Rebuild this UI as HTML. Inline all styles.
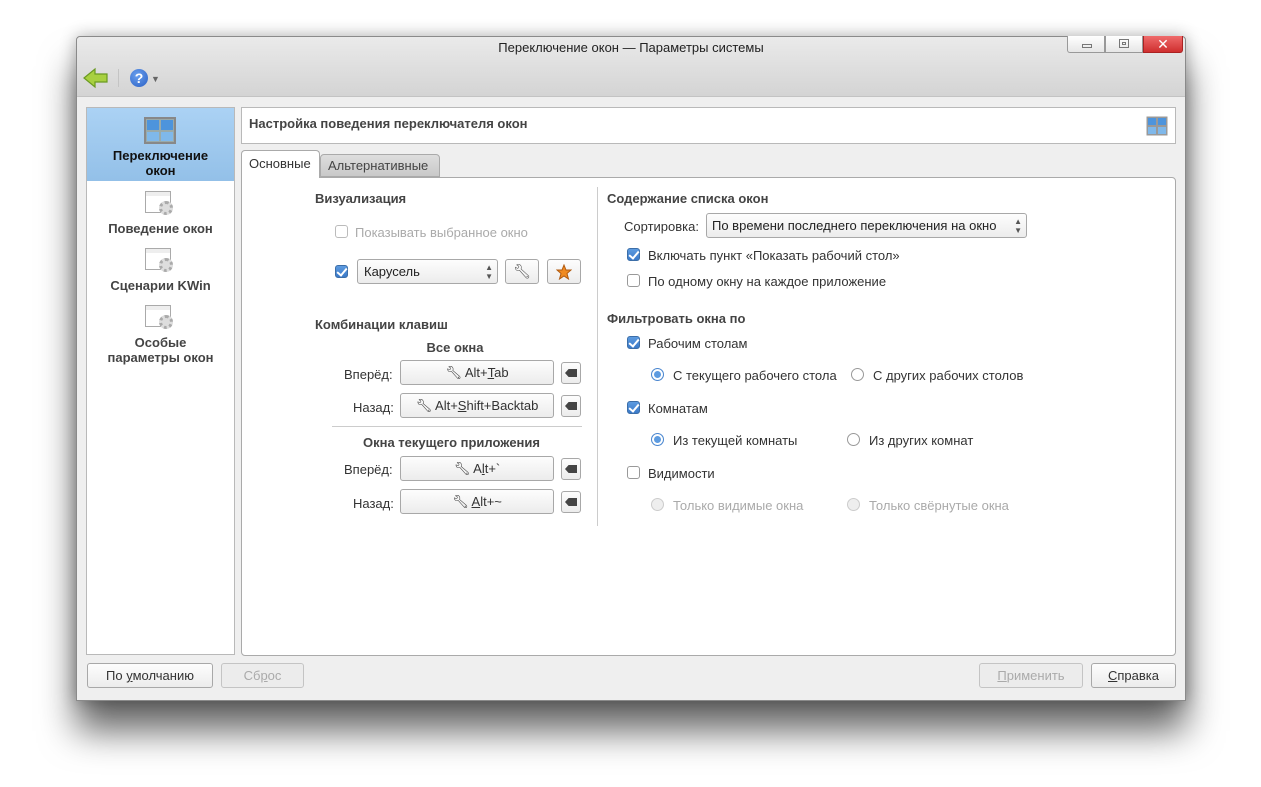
<!DOCTYPE html>
<html><head><meta charset="utf-8"><style>
*{box-sizing:border-box;margin:0;padding:0}
body{width:1261px;height:787px;background:#fff;position:relative;overflow:hidden;font-family:"Liberation Sans","DejaVu Sans",sans-serif;font-size:13px;color:#333}
.a{position:absolute}
#win{left:76px;top:36px;width:1110px;height:665px;background:#efefef;border:1px solid #8a8a8a;border-radius:4px 4px 0 0;box-shadow:0 30px 36px rgba(0,0,0,.6),0 0 16px rgba(0,0,0,.3)}
.top{left:0;top:0;width:1108px;height:60px;background:linear-gradient(#eaeaea,#d4d4d4);border-bottom:1px solid #c3c3c3;border-radius:4px 4px 0 0}
.t{white-space:nowrap}
.b{font-weight:bold}
.box{background:#fff;border:1px solid #b9b9b9}
.btn{background:linear-gradient(#fdfdfd,#ececec);border:1px solid #a8a8a8;border-radius:3px;text-align:center;line-height:23px}
.dis{color:#aaa;border-color:#c4c4c4}
.cb{width:13px;height:13px;border:1px solid #999;border-radius:3px;background:#fff}
.cb.on{background:linear-gradient(#5d9be0,#3a79c8);border-color:#3c6ea8}
.cb.on::after{content:"";position:absolute;left:3px;top:0px;width:4px;height:8px;border:solid #fff;border-width:0 2px 2px 0;transform:rotate(40deg)}
.rb{width:13px;height:13px;border:1px solid #999;border-radius:50%;background:#fff}
.rb.on{border-color:#4a86cf;box-shadow:inset 0 0 0 2px #fff,inset 0 0 0 6px #5d9be0}
.dim{color:#aaa}
.x{width:20px;height:22px;background:linear-gradient(#fdfdfd,#ececec);border:1px solid #a8a8a8;border-radius:3px}
.x::after{content:"";position:absolute;left:3px;top:6px;width:12px;height:8px;background:#444;clip-path:polygon(30% 0,100% 0,100% 100%,30% 100%,0 50%)}
</style></head><body>
<div id="win" class="a">
 <div class="a top"></div>
 <div class="a t" style="left:0;width:1108px;top:3px;text-align:center;font-size:13px;color:#222">Переключение окон — Параметры системы</div>
 <div class="a" style="left:990px;top:-1px;width:38px;height:17px;background:linear-gradient(#fff,#e6e6e6);border:1px solid #999;border-top:none;border-radius:0 0 0 3px"><div class="a" style="left:14px;top:8px;width:10px;height:4px;border:1px solid #777"></div></div>
 <div class="a" style="left:1028px;top:-1px;width:38px;height:17px;background:linear-gradient(#fff,#e6e6e6);border:1px solid #999;border-top:none"><div class="a" style="left:13px;top:3px;width:10px;height:9px;border:1px solid #777"></div><div class="a" style="left:16px;top:6px;width:4px;height:3px;border:1px solid #777"></div></div>
 <div class="a" style="left:1066px;top:-1px;width:40px;height:17px;background:linear-gradient(#ef6b6b,#cf2f2f);border:1px solid #a22;border-top:none;border-radius:0 0 3px 0;color:#fff;font-weight:bold;text-align:center;line-height:16px;font-size:14px">✕</div>
 <svg class="a" style="left:6px;top:30px" width="26" height="22"><path d="M1 11 L12 2 L12 7 L24 7 L24 15 L12 15 L12 20 Z" fill="#a8d040" stroke="#6a9a20" stroke-width="1.2"/></svg>
 <div class="a" style="left:41px;top:32px;width:1px;height:18px;background:#c4c4c4"></div>
 <div class="a" style="left:53px;top:32px;width:18px;height:18px;border-radius:50%;background:radial-gradient(circle at 40% 35%,#6aa0ee,#2a5fc4);color:#fff;font-weight:bold;text-align:center;line-height:18px;font-size:14px">?</div>
 <div class="a" style="left:74px;top:37px;font-size:9px;color:#666">▼</div>

 <div class="a box" style="left:9px;top:70px;width:149px;height:548px"></div>
 <div class="a" style="left:10px;top:71px;width:147px;height:73px;background:linear-gradient(#abd2f4,#93c0e8)"></div>
 <svg class="a" style="left:67px;top:80px" width="32" height="27"><rect x="1" y="1" width="30" height="25" fill="#9aa" stroke="#888" stroke-width="2"/><rect x="3" y="3" width="12" height="10" fill="#4d94dc"/><rect x="17" y="3" width="12" height="10" fill="#4d94dc"/><rect x="3" y="15" width="12" height="9" fill="#7fb8ea"/><rect x="17" y="15" width="12" height="9" fill="#7fb8ea"/></svg>
 <div class="a b" style="left:10px;width:147px;top:111px;text-align:center;line-height:15px;color:#111">Переключение<br>окон</div>
 <div class="a" style="left:68px;top:154px;width:26px;height:22px;border:1px solid #aaa;background:linear-gradient(#eee 4px,#fff 4px)"></div><div class="a" style="left:82px;top:164px;width:14px;height:14px;border-radius:50%;border:3px dotted #aaa;background:#ddd"></div>
 <div class="a b t" style="left:10px;width:147px;top:184px;text-align:center;color:#444">Поведение окон</div>
 <div class="a" style="left:68px;top:211px;width:26px;height:22px;border:1px solid #aaa;background:linear-gradient(#eee 4px,#fff 4px)"></div><div class="a" style="left:82px;top:221px;width:14px;height:14px;border-radius:50%;border:3px dotted #aaa;background:#ddd"></div>
 <div class="a b t" style="left:10px;width:147px;top:241px;text-align:center;color:#444">Сценарии KWin</div>
 <div class="a" style="left:68px;top:268px;width:26px;height:22px;border:1px solid #aaa;background:linear-gradient(#eee 4px,#fff 4px)"></div><div class="a" style="left:82px;top:278px;width:14px;height:14px;border-radius:50%;border:3px dotted #aaa;background:#ddd"></div>
 <div class="a b" style="left:10px;width:147px;top:298px;text-align:center;line-height:15px;color:#444">Особые<br>параметры окон</div>

 <div class="a box" style="left:164px;top:70px;width:935px;height:37px"></div>
 <div class="a b t" style="left:172px;top:79px;color:#444">Настройка поведения переключателя окон</div>
 <svg class="a" style="left:1069px;top:79px" width="22" height="20"><rect x="0.5" y="0.5" width="21" height="19" fill="#999"/><rect x="2" y="2" width="8" height="7" fill="#4d94dc"/><rect x="12" y="2" width="8" height="7" fill="#4d94dc"/><rect x="2" y="11" width="8" height="7" fill="#7fb8ea"/><rect x="12" y="11" width="8" height="7" fill="#7fb8ea"/></svg>

 <div class="a box" style="left:164px;top:140px;width:935px;height:479px;border-radius:0 4px 4px 4px;border-color:#aaa"></div>
 <div class="a" style="left:243px;top:117px;width:120px;height:23px;background:linear-gradient(#dedede,#c9c9c9);border:1px solid #aaa;border-radius:4px 4px 0 0;padding-left:7px;line-height:22px;color:#444">Альтернативные</div>
 <div class="a" style="left:164px;top:113px;width:79px;height:28px;background:#fff;border:1px solid #aaa;border-bottom:none;border-radius:4px 4px 0 0;padding-left:7px;line-height:26px">Основные</div>

 <div class="a b t" style="left:238px;top:154px;color:#444">Визуализация</div>
 <div class="a cb" style="left:258px;top:188px;border-color:#bbb"></div>
 <div class="a t dim" style="left:278px;top:188px">Показывать выбранное окно</div>
 <div class="a cb on" style="left:258px;top:228px"></div>
 <div class="a btn" style="left:280px;top:222px;width:141px;height:25px;text-align:left;padding-left:6px;line-height:23px;color:#222">Карусель<span class="a" style="right:4px;top:0;font-size:8px;line-height:9px;color:#555;padding-top:3px">▲<br>▼</span></div>
 <div class="a btn" style="left:428px;top:222px;width:34px;height:25px;font-size:14px;color:#555">🔧︎</div>
 <div class="a btn" style="left:470px;top:222px;width:34px;height:25px"><svg style="margin-top:4px" width="16" height="16"><path d="M8 1 L10 6 L15 6 L11 9.5 L12.5 15 L8 12 L3.5 15 L5 9.5 L1 6 L6 6 Z" fill="#f08a20" stroke="#b05a10"/></svg></div>

 <div class="a b t" style="left:238px;top:280px;color:#444">Комбинации клавиш</div>
 <div class="a b t" style="left:323px;top:303px;width:110px;text-align:center;color:#444">Все окна</div>
 <div class="a t" style="left:267px;top:330px">Вперёд:</div>
 <div class="a btn" style="left:323px;top:323px;width:154px;height:25px">🔧︎ Alt+<u>T</u>ab</div>
 <div class="a x" style="left:484px;top:325px"></div>
 <div class="a t" style="left:276px;top:363px">Назад:</div>
 <div class="a btn" style="left:323px;top:356px;width:154px;height:25px">🔧︎ Alt+<u>S</u>hift+Backtab</div>
 <div class="a x" style="left:484px;top:358px"></div>
 <div class="a" style="left:255px;top:389px;width:250px;height:1px;background:#ccc"></div>
 <div class="a b t" style="left:286px;top:398px;color:#444">Окна текущего приложения</div>
 <div class="a t" style="left:267px;top:425px">Вперёд:</div>
 <div class="a btn" style="left:323px;top:419px;width:154px;height:25px">🔧︎ A<u>l</u>t+`</div>
 <div class="a x" style="left:484px;top:421px"></div>
 <div class="a t" style="left:276px;top:459px">Назад:</div>
 <div class="a btn" style="left:323px;top:452px;width:154px;height:25px">🔧︎ <u>A</u>lt+~</div>
 <div class="a x" style="left:484px;top:454px"></div>
 <div class="a" style="left:520px;top:150px;width:1px;height:339px;background:#ccc"></div>

 <div class="a b t" style="left:530px;top:154px;color:#444">Содержание списка окон</div>
 <div class="a t" style="left:547px;top:182px">Сортировка:</div>
 <div class="a btn" style="left:629px;top:176px;width:321px;height:25px;text-align:left;padding-left:5px;line-height:23px;color:#222">По времени последнего переключения на окно<span class="a" style="right:4px;top:0;font-size:8px;line-height:9px;color:#555;padding-top:3px">▲<br>▼</span></div>
 <div class="a cb on" style="left:550px;top:211px"></div>
 <div class="a t" style="left:571px;top:211px">Включать пункт «Показать рабочий стол»</div>
 <div class="a cb" style="left:550px;top:237px"></div>
 <div class="a t" style="left:571px;top:237px">По одному окну на каждое приложение</div>
 <div class="a b t" style="left:530px;top:274px;color:#444">Фильтровать окна по</div>
 <div class="a cb on" style="left:550px;top:299px"></div>
 <div class="a t" style="left:571px;top:299px">Рабочим столам</div>
 <div class="a rb on" style="left:574px;top:331px"></div>
 <div class="a t" style="left:596px;top:331px">С текущего рабочего стола</div>
 <div class="a rb" style="left:774px;top:331px"></div>
 <div class="a t" style="left:796px;top:331px">С других рабочих столов</div>
 <div class="a cb on" style="left:550px;top:364px"></div>
 <div class="a t" style="left:571px;top:364px">Комнатам</div>
 <div class="a rb on" style="left:574px;top:396px"></div>
 <div class="a t" style="left:596px;top:396px">Из текущей комнаты</div>
 <div class="a rb" style="left:770px;top:396px"></div>
 <div class="a t" style="left:792px;top:396px">Из других комнат</div>
 <div class="a cb" style="left:550px;top:429px"></div>
 <div class="a t" style="left:571px;top:429px">Видимости</div>
 <div class="a rb" style="left:574px;top:461px;border-color:#ccc;background:#eee"></div>
 <div class="a t dim" style="left:596px;top:461px">Только видимые окна</div>
 <div class="a rb" style="left:770px;top:461px;border-color:#ccc;background:#eee"></div>
 <div class="a t dim" style="left:792px;top:461px">Только свёрнутые окна</div>

 <div class="a btn" style="left:10px;top:626px;width:126px;height:25px">По <u>у</u>молчанию</div>
 <div class="a btn dis" style="left:144px;top:626px;width:83px;height:25px;background:#ececec">Сб<u>р</u>ос</div>
 <div class="a btn dis" style="left:902px;top:626px;width:104px;height:25px;background:#ececec"><u>П</u>рименить</div>
 <div class="a btn" style="left:1014px;top:626px;width:85px;height:25px"><u>С</u>правка</div>
</div>
</body></html>
